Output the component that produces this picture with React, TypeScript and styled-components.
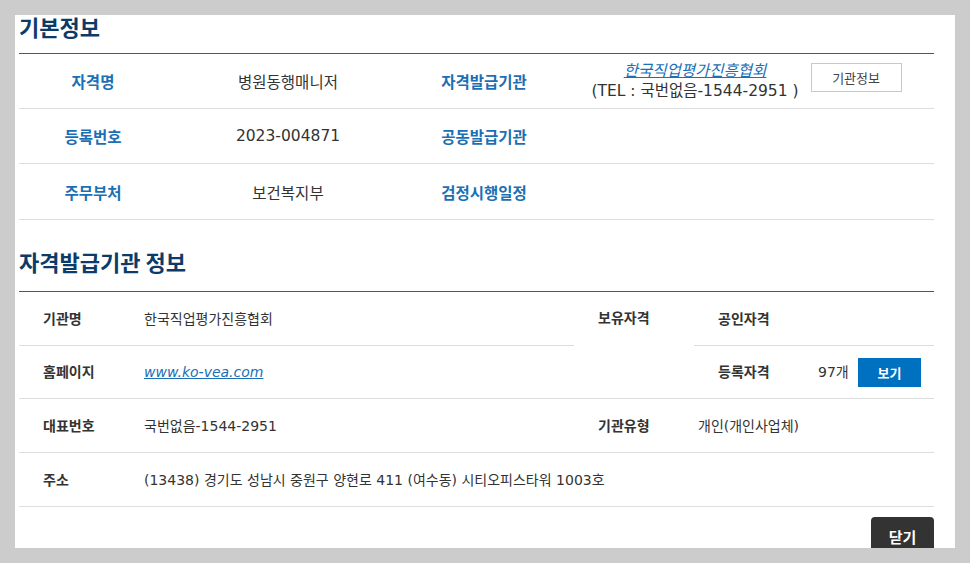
import styled, { createGlobalStyle } from "styled-components";

const GlobalStyle = createGlobalStyle`
  html, body {
    margin: 0;
    padding: 0;
    background: #cccccc;
    font-family: "DejaVu Sans", "Noto Sans CJK KR", sans-serif;
    color: #333;
  }
  #root {
    padding: 15px 15px 0 15px;
  }
`;

const Panel = styled.div`
  background: #fff;
  height: 533px;
  padding: 0 21px 0 4px;
  box-sizing: border-box;
`;

const Title = styled.h2<{ $top?: number; $bottom: number }>`
  margin: ${(p) => p.$top ?? 0}px 0 ${(p) => p.$bottom}px;
  font-family: "Noto Sans CJK KR", sans-serif;
  font-size: 22px;
  line-height: 22px;
  font-weight: 700;
  color: #0d3b69;
`;

const Table = styled.table`
  width: 100%;
  border-collapse: collapse;
  table-layout: fixed;
  border-top: 1px solid #555;
`;

const Row = styled.tr<{ $h: number }>`
  height: ${(p) => p.$h}px;
`;

const Label = styled.th`
  font-size: 15.5px;
  font-weight: 700;
  color: #1a6fb5;
  text-align: center;
  border-bottom: 1px solid #ddd;
  padding: 0;
`;

const Value = styled.td`
  font-size: 15.5px;
  color: #333;
  text-align: center;
  border-bottom: 1px solid #ddd;
  padding: 0;
`;

const OrgCell = styled.div`
  display: flex;
  align-items: center;
  justify-content: center;
  gap: 12px;
`;

const OrgText = styled.div`
  line-height: 20px;
  text-align: center;
`;

const Link = styled.a`
  color: #1a6fb5;
  font-style: italic;
  text-decoration: underline;
  cursor: pointer;
`;

const OutlineButton = styled.button`
  width: 91px;
  height: 29px;
  background: #fff;
  border: 1px solid #c9c9c9;
  font-family: inherit;
  font-size: 13px;
  color: #444;
  padding: 0;
  margin-top: -7px;
`;

const InfoLabel = styled.th<{ $top?: boolean }>`
  font-size: 14px;
  font-weight: 700;
  color: #333;
  text-align: left;
  padding: ${(p) => (p.$top ? "16px" : "0")} 0 0 24px;
  border-bottom: 1px solid #ddd;
  vertical-align: ${(p) => (p.$top ? "top" : "middle")};
  line-height: 20px;
`;

const InfoValue = styled.td<{ $pad?: number }>`
  font-size: 14px;
  color: #333;
  text-align: left;
  padding: 0 0 0 ${(p) => p.$pad ?? 24}px;
  border-bottom: 1px solid #ddd;
  line-height: 20px;
`;

const CountCell = styled.div`
  display: flex;
  align-items: center;
  justify-content: space-between;
  padding-right: 13px;
`;

const BlueButton = styled.button`
  width: 63px;
  height: 29px;
  background: #0070c0;
  color: #fff;
  border: none;
  font-family: inherit;
  font-size: 13px;
  font-weight: 700;
  padding: 0;
`;

const Footer = styled.div`
  display: flex;
  justify-content: flex-end;
  margin-top: 10px;
`;

const CloseButton = styled.button`
  width: 63px;
  height: 39px;
  background: rgba(34, 34, 34, 0.92);
  color: #fff;
  border: none;
  border-radius: 4px;
  font-family: inherit;
  font-size: 15px;
  font-weight: 700;
  padding: 0;
`;

export default function App() {
  return (
    <>
      <GlobalStyle />
      <Panel>
        <Title $bottom={16}>기본정보</Title>
        <Table>
          <colgroup>
            <col style={{ width: 148 }} />
            <col style={{ width: 242 }} />
            <col style={{ width: 150 }} />
            <col />
          </colgroup>
          <tbody>
            <Row $h={55}>
              <Label>자격명</Label>
              <Value>병원동행매니저</Value>
              <Label>자격발급기관</Label>
              <Value>
                <OrgCell>
                  <OrgText>
                    <Link>한국직업평가진흥협회</Link>
                    <br />
                    (TEL : 국번없음-1544-2951 )
                  </OrgText>
                  <OutlineButton>기관정보</OutlineButton>
                </OrgCell>
              </Value>
            </Row>
            <Row $h={55}>
              <Label>등록번호</Label>
              <Value>2023-004871</Value>
              <Label>공동발급기관</Label>
              <Value />
            </Row>
            <Row $h={56}>
              <Label>주무부처</Label>
              <Value>보건복지부</Value>
              <Label>검정시행일정</Label>
              <Value />
            </Row>
          </tbody>
        </Table>

        <Title $top={30} $bottom={19}>
          자격발급기관 정보
        </Title>
        <Table>
          <colgroup>
            <col style={{ width: 101 }} />
            <col style={{ width: 454 }} />
            <col style={{ width: 120 }} />
            <col style={{ width: 100 }} />
            <col />
          </colgroup>
          <tbody>
            <Row $h={54}>
              <InfoLabel>기관명</InfoLabel>
              <InfoValue>한국직업평가진흥협회</InfoValue>
              <InfoLabel rowSpan={2} $top>
                보유자격
              </InfoLabel>
              <InfoLabel>공인자격</InfoLabel>
              <InfoValue />
            </Row>
            <Row $h={53}>
              <InfoLabel>홈페이지</InfoLabel>
              <InfoValue>
                <Link>www.ko-vea.com</Link>
              </InfoValue>
              <InfoLabel>등록자격</InfoLabel>
              <InfoValue>
                <CountCell>
                  <span>97개</span>
                  <BlueButton>보기</BlueButton>
                </CountCell>
              </InfoValue>
            </Row>
            <Row $h={54}>
              <InfoLabel>대표번호</InfoLabel>
              <InfoValue>국번없음-1544-2951</InfoValue>
              <InfoLabel>기관유형</InfoLabel>
              <InfoValue colSpan={2} $pad={4}>
                개인(개인사업체)
              </InfoValue>
            </Row>
            <Row $h={54}>
              <InfoLabel>주소</InfoLabel>
              <InfoValue colSpan={4}>
                (13438) 경기도 성남시 중원구 양현로 411 (여수동) 시티오피스타워 1003호
              </InfoValue>
            </Row>
          </tbody>
        </Table>
        <Footer>
          <CloseButton>닫기</CloseButton>
        </Footer>
      </Panel>
    </>
  );
}
